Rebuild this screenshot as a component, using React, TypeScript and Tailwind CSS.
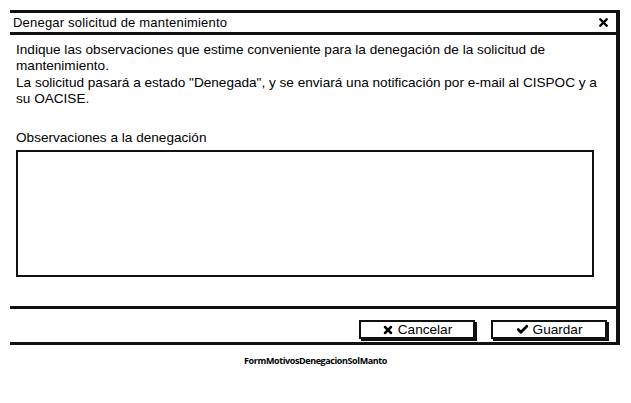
import { X, Check } from 'lucide-react'

export default function App() {
  return (
    <div className="w-[631px] h-[403px] bg-white text-black font-['Liberation_Sans',Arial,sans-serif]">
      <div className="pt-[10px] pl-[10px]">
        <div className="w-[610px] border-t-[3px] border-r-4 border-[#111]">
          {/* title bar */}
          <div className="h-[22px] flex items-center justify-between pl-[3px] pr-[6px] border-b-[3px] border-[#111] text-[13px]">
            <span className="tracking-[0.2px]">Denegar solicitud de mantenimiento</span>
            <X size={13} strokeWidth={4.5} />
          </div>

          {/* body */}
          <div className="px-[6px] pt-[7px] h-[274px] border-b-[3px] border-[#111]">
            <p className="text-[13.6px] leading-[16.3px] whitespace-nowrap">
              Indique las observaciones que estime conveniente para la denegación de la solicitud de
              <br />
              mantenimiento.
              <br />
              La solicitud pasará a estado "Denegada", y se enviará una notificación por e-mail al CISPOC y a
              <br />
              su OACISE.
            </p>
            <p className="mt-[23px] text-[13.6px] leading-[16px]">Observaciones a la denegación</p>
            <div className="mt-[4px] w-[578px] h-[127px] border-2 border-[#111]" />
          </div>

          {/* footer */}
          <div className="h-[36px] flex items-start justify-end gap-[16px] pt-[11px] pr-[9px] border-b-[3px] border-[#111]">
            <button className="w-[116px] h-[19px] flex items-center justify-center gap-[4px] border-2 border-[#111] shadow-[2px_2px_0_#111] text-[13.6px] leading-none">
              <X size={12} strokeWidth={5} />
              <span>Cancelar</span>
            </button>
            <button className="w-[116px] h-[19px] flex items-center justify-center gap-[4px] border-2 border-[#111] shadow-[2px_2px_0_#111] text-[13.6px] leading-none">
              <Check size={13} strokeWidth={5} />
              <span>Guardar</span>
            </button>
          </div>
        </div>
      </div>
      <p className="mt-[9px] text-center text-[9px] font-bold tracking-[-0.4px] font-['Open_Sans',sans-serif]">
        FormMotivosDenegacionSolManto
      </p>
    </div>
  )
}
